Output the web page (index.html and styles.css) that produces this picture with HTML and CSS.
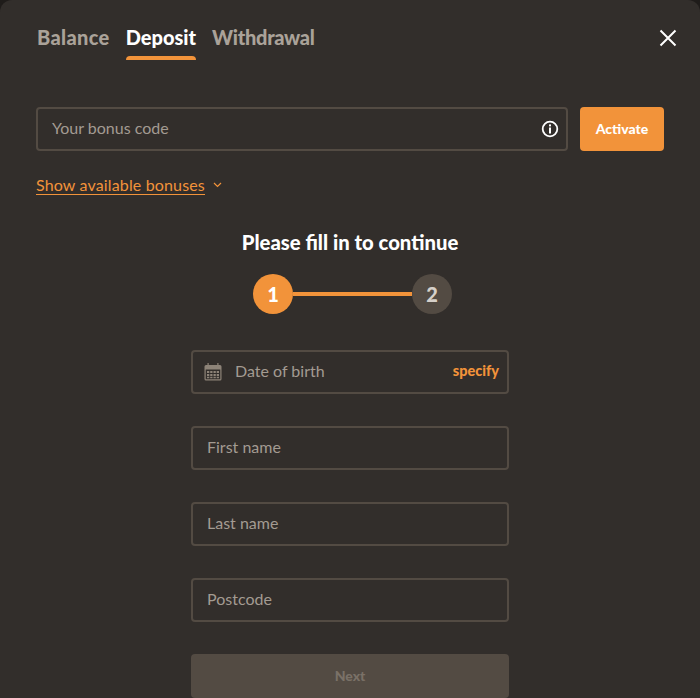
FILE: index.html
```html
<!DOCTYPE html>
<html lang="en">
<head>
    <meta charset="UTF-8">
    <meta name="viewport" content="width=device-width, initial-scale=1.0">
    <title>Deposit</title>
    <link rel="stylesheet" href="styles.css">
</head>
<body>
    <div class="modal">
        <div class="header">
            <div class="tabs">
                <a class="tab">Balance</a>
                <a class="tab active">Deposit</a>
                <a class="tab">Withdrawal</a>
            </div>
            <button class="close" aria-label="Close">
                <svg width="20" height="20" viewBox="0 0 20 20"><path d="M2.500 2.500 17.500 17.500M17.500 2.500 2.500 17.500" stroke="#fff" stroke-width="2" fill="none"/></svg>
            </button>
        </div>

        <div class="bonus-row">
            <div class="field bonus-field">
                <span class="placeholder">Your bonus code</span>
                <svg class="info" width="18" height="18" viewBox="0 0 18 18"><circle cx="9" cy="9" r="7.300" stroke="#fff" stroke-width="1.800" fill="none"/><rect x="8" y="4.400" width="2" height="2" fill="#fff"/><rect x="8" y="7.500" width="2" height="6" fill="#fff"/></svg>
            </div>
            <button class="activate">Activate</button>
        </div>

        <div class="show-bonuses">
            <a class="show-link">Show available bonuses</a>
            <svg width="9" height="6" viewBox="0 0 9 6"><path d="M1 1 4.500 4.500 8 1" stroke="#f2933a" stroke-width="1.200" fill="none"/></svg>
        </div>

        <h2 class="title">Please fill in to continue</h2>

        <div class="steps">
            <span class="step current">1</span>
            <span class="step-line"></span>
            <span class="step">2</span>
        </div>

        <form class="form">
            <div class="field date-field">
                <svg class="calendar" width="18" height="18" viewBox="0 0 18 18" fill="#8d8378"><path d="M3.500 0h1.200v2h8.600V0h1.200v2H16a1.500 1.500 0 0 1 1.500 1.500v12.500a1.500 1.500 0 0 1-1.500 1.500H2A1.500 1.500 0 0 1 .5 16V3.500A1.500 1.500 0 0 1 2 2h1.500zM1.700 6.500v9.500c0 .2.100.3.300.3h14c.2 0 .3-.1.300-.3V6.500z"/><path d="M3 8h2.300v2H3zM6.200 8h2.300v2H6.200zM9.500 8h2.300v2H9.500zM12.700 8H15v2h-2.300zM3 11h2.300v2H3zM6.200 11h2.300v2H6.200zM9.500 11h2.300v2H9.500zM12.700 11H15v2h-2.300zM3 13.700h2.300v1.500H3zM6.200 13.700h2.300v1.500H6.200zM9.500 13.700h2.300v1.500H9.500zM12.700 13.700H15v1.500h-2.300z"/></svg>
                <span class="placeholder">Date of birth</span>
                <span class="specify">specify</span>
            </div>
            <div class="field"><span class="placeholder">First name</span></div>
            <div class="field"><span class="placeholder">Last name</span></div>
            <div class="field"><span class="placeholder">Postcode</span></div>
            <button class="next" type="button" disabled>Next</button>
        </form>
    </div>
</body>
</html>
```

FILE: styles.css
```css
html, body {
    height: 100%;
}

body {
    margin: 0;
    background: #1f1c1a;
    font-family: Lato, "Open Sans", sans-serif;
    overflow: hidden;
}

.modal {
    box-sizing: border-box;
    height: 698px;
    padding: 24px 36px 0;
    background: #322e2b;
    border-radius: 12px 12px 0 0;
    overflow: hidden;
}

.header {
    display: flex;
    justify-content: space-between;
    align-items: flex-start;
}

.tabs {
    display: flex;
    gap: 16px;
    padding-left: 1px;
}

.tab {
    height: 36px;
    font-size: 20px;
    line-height: 27px;
    font-weight: 900;
    color: #aaa299;
}

.tab:first-child {
    letter-spacing: .35px;
}

.tab:last-child {
    letter-spacing: -.3px;
}

.tab.active {
    color: #fff;
}

.tab.active::after {
    content: "";
    display: block;
    height: 4px;
    margin-top: 5px;
    border-radius: 4px 4px 0 0;
    background: #f2933a;
}

.close {
    margin: 4px -14px 0 0;
    padding: 0;
    width: 20px;
    height: 20px;
    border: none;
    background: none;
}

.bonus-row {
    display: flex;
    gap: 12px;
    margin-top: 47px;
}

.field {
    box-sizing: border-box;
    display: flex;
    align-items: center;
    height: 44px;
    padding: 0 14px 3px;
    border: 2px solid #534b43;
    border-radius: 4px;
}

.bonus-field {
    flex: 1;
    justify-content: space-between;
    padding-right: 7px;
}

.bonus-field .info {
    margin-top: 2px;
}

.placeholder {
    font-size: 16px;
    color: #a39b92;
}

.activate {
    width: 84px;
    height: 44px;
    padding: 0 0 2px;
    border: none;
    border-radius: 4px;
    background: #f2933a;
    color: #fff;
    font-family: inherit;
    font-size: 14px;
    font-weight: 900;
}

.show-bonuses {
    display: flex;
    align-items: center;
    gap: 8px;
    margin-top: 24px;
}

.show-link {
    font-size: 16px;
    line-height: 19px;
    letter-spacing: .15px;
    color: #f2933a;
    border-bottom: 1px solid #f2933a;
}

.title {
    margin: 35px 0 0;
    text-align: center;
    font-size: 20.250px;
    line-height: 24px;
    font-weight: 900;
    color: #fff;
}

.steps {
    display: flex;
    align-items: center;
    justify-content: center;
    margin-top: 20px;
    padding-left: 5px;
}

.step {
    display: flex;
    align-items: center;
    justify-content: center;
    width: 40px;
    height: 40px;
    border-radius: 50%;
    background: #534b43;
    color: #d6d0c9;
    font-size: 20px;
    font-weight: 900;
}

.step.current {
    background: #f2933a;
    color: #fff;
}

.step-line {
    width: 119px;
    height: 4px;
    background: #f2933a;
}

.form {
    display: flex;
    flex-direction: column;
    gap: 32px;
    width: 318px;
    margin: 36px auto 0;
}

.date-field {
    padding: 0 8px 3px 11px;
}

.calendar {
    margin: 3px 13px 0 0;
}

.specify {
    margin-left: auto;
    font-size: 14.500px;
    font-weight: 900;
    color: #f2933a;
}

.next {
    height: 44px;
    padding: 0 0 2px;
    border: none;
    border-radius: 4px;
    background: #534b43;
    color: #7a7167;
    font-family: inherit;
    font-size: 14px;
    font-weight: 900;
}
```
